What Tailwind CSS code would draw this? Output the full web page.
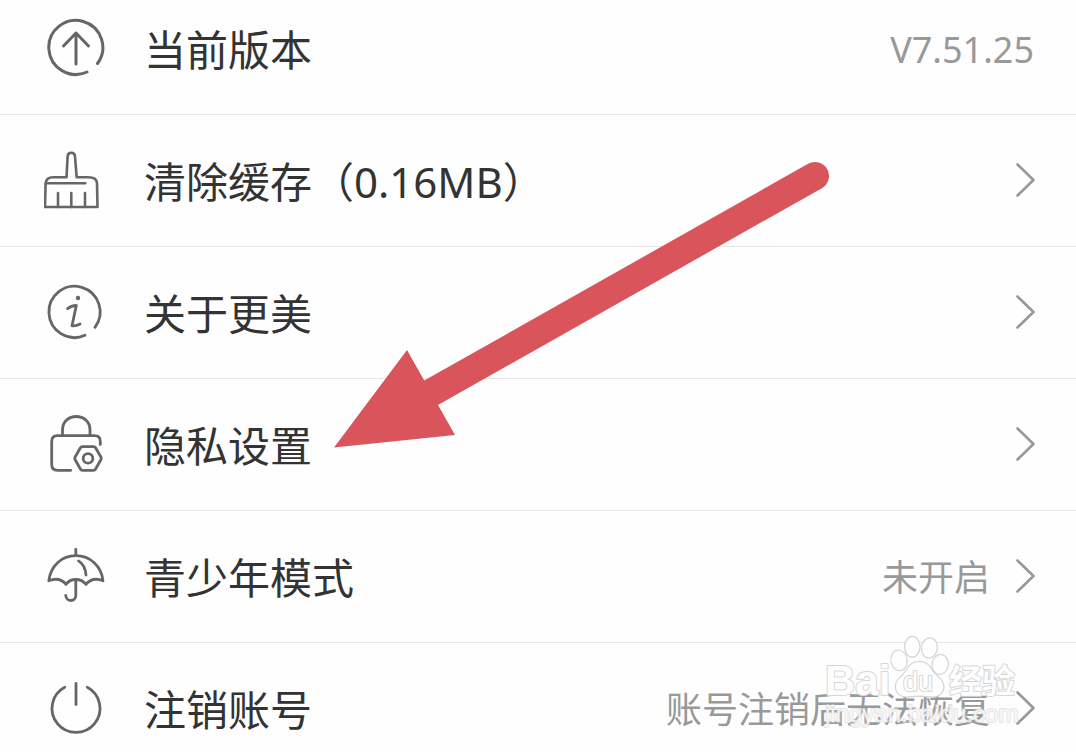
<!DOCTYPE html>
<html lang="zh-CN">
<head>
    <meta charset="UTF-8">
    <meta name="viewport" content="width=device-width, initial-scale=1.0">
    <title>设置</title>
    <script src="https://cdn.jsdelivr.net/npm/@tailwindcss/browser@4"></script>
</head>
<body class="bg-[#fefefe] font-['Noto_Sans','Noto_Sans_CJK_SC',sans-serif] text-[#333333]">
    <main class="relative h-screen overflow-hidden">
        <!-- Settings list, scrolled slightly past the first row -->
        <ul class="-mt-[17px]">
            <li class="flex h-[132px] items-center border-b border-[#e6e6e6] pl-11 pr-[42px]">
                <svg class="h-[65px] w-16 shrink-0" viewBox="0 0 64 65" fill="none" stroke="#666" stroke-width="3" stroke-linecap="round" stroke-linejoin="round">
                    <path d="M53.5 47.5A27 27 0 1 0 43 56" />
                    <path d="M32 48V17M19.5 30L32 17L44.5 30" />
                </svg>
                <span class="ml-9 pt-0.5 text-[42px] leading-[60px]">当前版本</span>
                <span class="ml-auto pt-0.5 text-4xl text-[#999999]">V7.51.25</span>
            </li>
            <li>
                <a href="#cache" class="flex h-[132px] items-center border-b border-[#e6e6e6] pl-11 pr-10">
                    <svg class="h-[65px] w-16 shrink-0" viewBox="0 0 64 65" fill="none" stroke="#666" stroke-width="2.6" stroke-linecap="round" stroke-linejoin="round">
                        <path d="M1.6 35.3C2 31 5 29.3 9.3 29.3H22.5L23.6 8.5C23.8 3.4 30.8 3.4 31 8.5L32.7 29.3H44C49.5 29.3 53 31 53 35.3L53.5 59H1Z" />
                        <path d="M2 35.3H41.3M14 45V59M27.3 45V59M41 45V59" />
                    </svg>
                    <span class="ml-9 pt-0.5 text-[42px] leading-[60px]">清除缓存（0.16MB）</span>
                    <svg class="ml-auto h-9 w-5 shrink-0" viewBox="0 0 20 36" fill="none" stroke="#999" stroke-width="2.6" stroke-linecap="round" stroke-linejoin="round">
                        <path d="M1.5 1.5L17.5 17L1.5 32.5" />
                    </svg>
                </a>
            </li>
            <li>
                <a href="#about" class="flex h-[132px] items-center border-b border-[#e6e6e6] pl-11 pr-10">
                    <svg class="h-[65px] w-16 shrink-0" viewBox="0 0 64 65" fill="none" stroke="#666" stroke-width="2.8" stroke-linecap="round" stroke-linejoin="round">
                        <path d="M51 47.3A25.6 25.6 0 1 0 41 55.3" />
                        <path d="M23.5 28.7C26 26.5 28.5 25.5 32.3 25.5L28 45.8C31 46 33.5 45.5 36 44" />
                        <circle cx="34" cy="18" r="2.2" fill="#666" stroke="none" />
                    </svg>
                    <span class="ml-9 pt-0.5 text-[42px] leading-[60px]">关于更美</span>
                    <svg class="ml-auto h-9 w-5 shrink-0" viewBox="0 0 20 36" fill="none" stroke="#999" stroke-width="2.6" stroke-linecap="round" stroke-linejoin="round">
                        <path d="M1.5 1.5L17.5 17L1.5 32.5" />
                    </svg>
                </a>
            </li>
            <li>
                <a href="#privacy" class="flex h-[132px] items-center border-b border-[#e6e6e6] pl-11 pr-10">
                    <svg class="h-[65px] w-16 shrink-0" viewBox="0 0 64 65" fill="none" stroke="#666" stroke-width="2.8" stroke-linecap="round" stroke-linejoin="round">
                        <path d="M18.5 23V18C18.5 0 46 0 46 18V23" />
                        <path d="M56.3 32.5V29.5Q56.3 23.7 50.5 23.7H13.5Q7.7 23.7 7.7 29.5V52.5Q7.7 58.3 13.5 58.3H26.7" />
                        <path d="M38.5 34.6H49.5Q50.9 34.6 51.6 35.8L57 45.2Q57.6 46.4 57 47.5L51.6 57Q50.9 58.3 49.5 58.3H38.5Q37.1 58.3 36.4 57L31 47.5Q30.4 46.4 31 45.2L36.4 35.8Q37.1 34.6 38.5 34.6Z" />
                        <circle cx="44" cy="46.4" r="4.8" />
                    </svg>
                    <span class="ml-9 pt-0.5 text-[42px] leading-[60px]">隐私设置</span>
                    <svg class="ml-auto h-9 w-5 shrink-0" viewBox="0 0 20 36" fill="none" stroke="#999" stroke-width="2.6" stroke-linecap="round" stroke-linejoin="round">
                        <path d="M1.5 1.5L17.5 17L1.5 32.5" />
                    </svg>
                </a>
            </li>
            <li>
                <a href="#teen" class="flex h-[132px] items-center border-b border-[#e6e6e6] pl-11 pr-10">
                    <svg class="h-[65px] w-16 shrink-0" viewBox="0 0 64 65" fill="none" stroke="#666" stroke-width="2.8" stroke-linecap="round" stroke-linejoin="round">
                        <path d="M31.8 5.5V11.7" />
                        <path d="M4.8 36.8C6.5 22 17.5 11.7 31.8 11.7S57.5 22 59 36.8Q48.5 32.5 42 40.3Q38 35.5 31.8 35.5T22 40.3Q15.5 32.5 4.8 36.8Z" />
                        <path d="M31.8 35.5V51.5C31.8 58 22.3 58.3 21.7 51.5" />
                        <path d="M34.5 16.9C38.8 19.5 41.5 24.5 42 31" />
                    </svg>
                    <span class="ml-9 pt-0.5 text-[42px] leading-[60px]">青少年模式</span>
                    <span class="ml-auto pt-0.5 text-4xl text-[#999999]">未开启</span>
                    <svg class="ml-[26px] h-9 w-5 shrink-0" viewBox="0 0 20 36" fill="none" stroke="#999" stroke-width="2.6" stroke-linecap="round" stroke-linejoin="round">
                        <path d="M1.5 1.5L17.5 17L1.5 32.5" />
                    </svg>
                </a>
            </li>
            <li>
                <a href="#delete" class="flex h-[132px] items-center pl-11 pr-10">
                    <svg class="h-[65px] w-16 shrink-0" viewBox="0 0 64 65" fill="none" stroke="#666" stroke-width="2.8" stroke-linecap="round" stroke-linejoin="round">
                        <path d="M20.7 10.3A24 24 0 1 0 43.3 10.3" />
                        <path d="M32 6.5V27.5" />
                    </svg>
                    <span class="ml-9 pt-0.5 text-[42px] leading-[60px]">注销账号</span>
                    <span class="ml-auto pt-0.5 text-4xl text-[#999999]">账号注销后无法恢复</span>
                    <svg class="ml-[26px] h-9 w-5 shrink-0" viewBox="0 0 20 36" fill="none" stroke="#999" stroke-width="2.6" stroke-linecap="round" stroke-linejoin="round">
                        <path d="M1.5 1.5L17.5 17L1.5 32.5" />
                    </svg>
                </a>
            </li>
        </ul>

        <!-- Arrow pointing at the privacy row -->
        <svg class="pointer-events-none absolute left-[330px] top-[158px] h-[294px] w-[504px]" viewBox="330 158 504 294" fill="#da555b">
            <path d="M334 447.5L407 350L455 435Z" />
            <path d="M428 394.5L815 176" stroke="#da555b" stroke-width="28" stroke-linecap="round" />
        </svg>

        <!-- Watermark -->
        <svg class="pointer-events-none absolute right-[56px] top-[632px] h-[104px] w-[200px]" viewBox="820 632 200 104" fill="#fefefe" stroke="#d6d6d6" stroke-width="2" stroke-linejoin="round" paint-order="stroke">
            <text x="825" y="695" class="font-['Liberation_Sans',sans-serif] text-[42px] font-bold">Bai</text>
            <text x="949" y="693" class="font-['Noto_Sans_CJK_SC',sans-serif] text-[33px] font-bold">经验</text>
            <g stroke-width="2.6">
                <ellipse cx="912.3" cy="646.8" rx="7" ry="9.7" />
                <ellipse cx="929.4" cy="648" rx="7.3" ry="9.5" transform="rotate(8 929.4 648)" />
                <ellipse cx="899" cy="660.4" rx="7.5" ry="9.7" transform="rotate(-8 899 660.4)" />
                <ellipse cx="940.2" cy="664.4" rx="7.5" ry="9.3" transform="rotate(8 940.2 664.4)" />
                <path d="M919.3 662C925 662 929 665 931.5 670C934.5 675.5 943.3 679 943.3 686.5C943.3 693 938 697 931 696.3C923 695.3 916 695.3 908 696.3C901 697 896 693 896 686.5C896 679 904 675.5 907 670C909.5 665 913.5 662 919.3 662Z" />
            </g>
            <text x="903" y="691" class="font-['Liberation_Sans',sans-serif] text-[27px]">du</text>
            <text x="825" y="722" fill-opacity="0.75" stroke="#d4d4d4" stroke-opacity="0.6" class="font-['Liberation_Sans',sans-serif] text-2xl">jingyan.baidu.com</text>
        </svg>
    </main>
</body>
</html>
